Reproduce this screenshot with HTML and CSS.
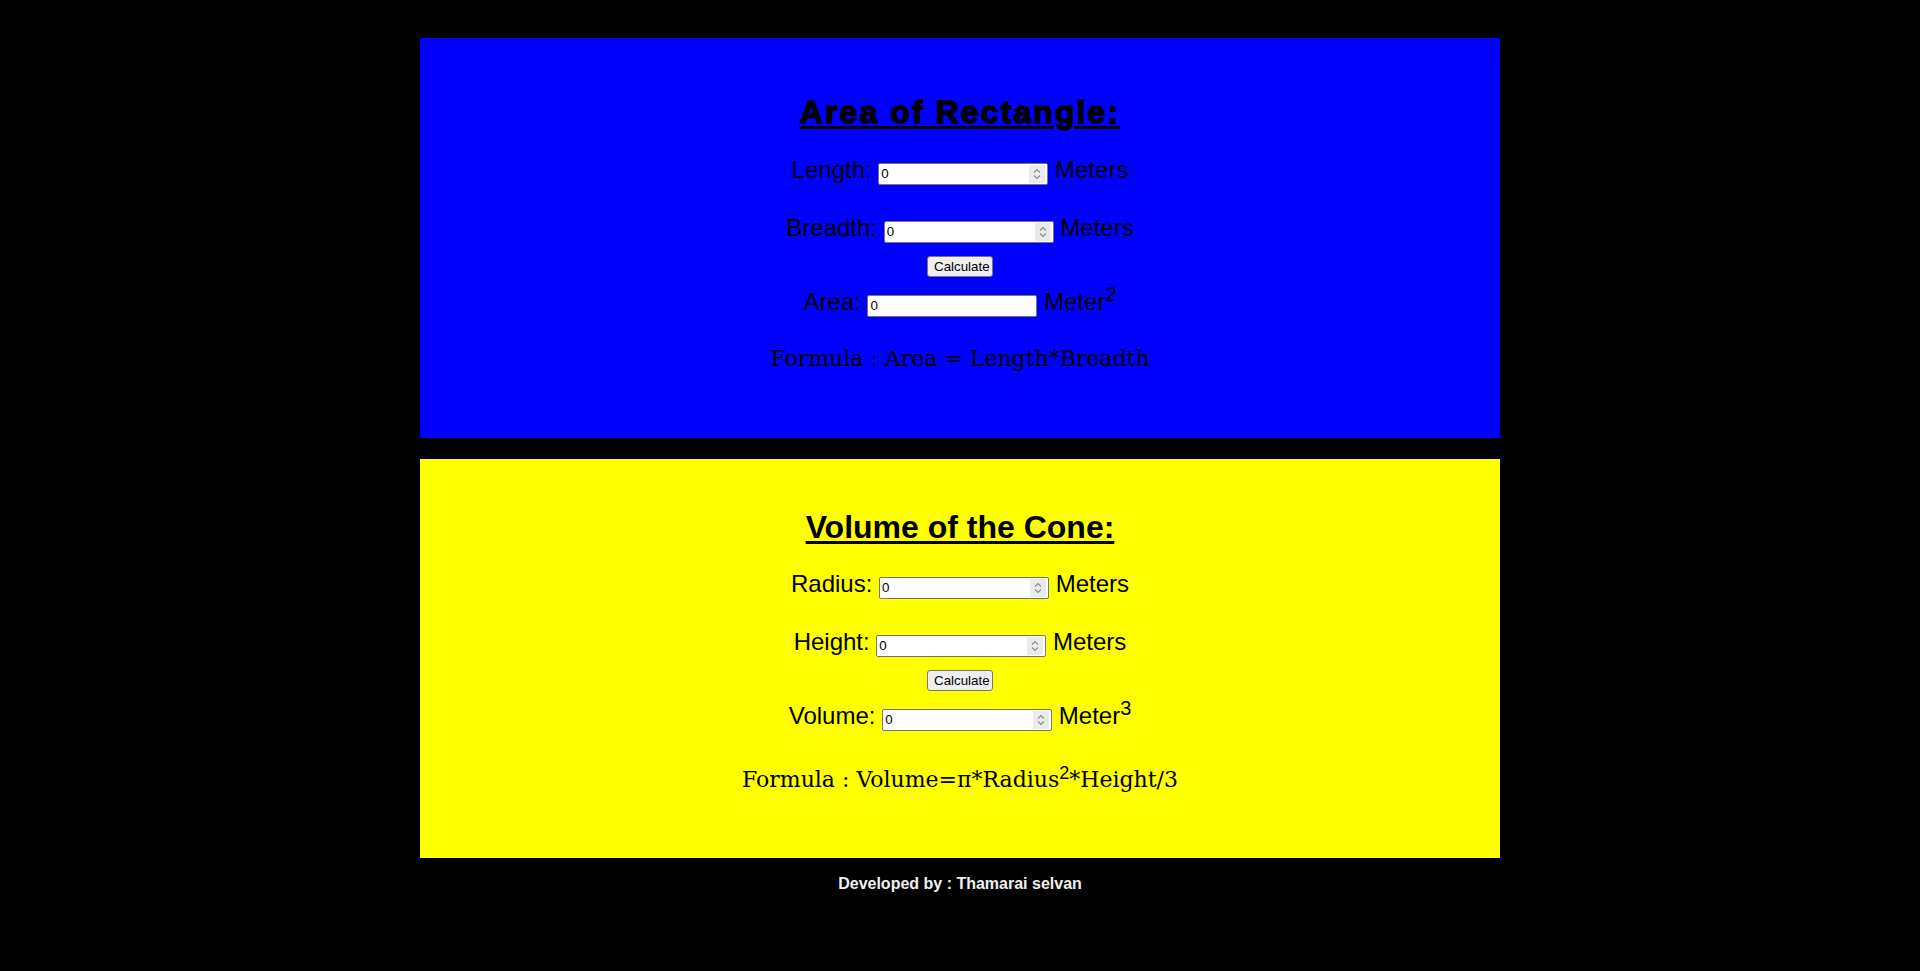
FILE: index.html
```html
<!DOCTYPE html>
<html lang="en">
<head>
<meta charset="utf-8">
<title>Area and Volume Calculator</title>
<link rel="stylesheet" href="styles.css">
</head>
<body>
<main class="page">
  <section class="card card-blue">
    <h1 class="title title-black">Area of Rectangle:</h1>
    <div class="row row-first">Length: <span class="num"><input class="field" type="number" value="0"><span class="spin"><svg width="16" height="18" viewBox="0 0 16 18"><path d="M5 7.5 L8 4.5 L11 7.5 M5 10.5 L8 13.5 L11 10.5" fill="none" stroke="#8a8a8a" stroke-width="1.1"/></svg></span></span> Meters</div>
    <div class="row row-second">Breadth: <span class="num"><input class="field" type="number" value="0"><span class="spin"><svg width="16" height="18" viewBox="0 0 16 18"><path d="M5 7.5 L8 4.5 L11 7.5 M5 10.5 L8 13.5 L11 10.5" fill="none" stroke="#8a8a8a" stroke-width="1.1"/></svg></span></span> Meters</div>
    <div class="btn-row"><button class="btn" type="button">Calculate</button></div>
    <div class="row row-result">Area: <input class="field" type="text" value="0"> Meter<sup class="sup">2</sup></div>
    <p class="formula formula-blue">Formula : Area = Length*Breadth</p>
  </section>
  <section class="card card-yellow">
    <h1 class="title title-bold">Volume of the Cone:</h1>
    <div class="row row-first-y">Radius: <span class="num"><input class="field" type="number" value="0"><span class="spin"><svg width="16" height="18" viewBox="0 0 16 18"><path d="M5 7.5 L8 4.5 L11 7.5 M5 10.5 L8 13.5 L11 10.5" fill="none" stroke="#8a8a8a" stroke-width="1.1"/></svg></span></span> Meters</div>
    <div class="row row-second">Height: <span class="num"><input class="field" type="number" value="0"><span class="spin"><svg width="16" height="18" viewBox="0 0 16 18"><path d="M5 7.5 L8 4.5 L11 7.5 M5 10.5 L8 13.5 L11 10.5" fill="none" stroke="#8a8a8a" stroke-width="1.1"/></svg></span></span> Meters</div>
    <div class="btn-row"><button class="btn" type="button">Calculate</button></div>
    <div class="row row-result">Volume: <span class="num"><input class="field" type="number" value="0"><span class="spin"><svg width="16" height="18" viewBox="0 0 16 18"><path d="M5 7.5 L8 4.5 L11 7.5 M5 10.5 L8 13.5 L11 10.5" fill="none" stroke="#8a8a8a" stroke-width="1.1"/></svg></span></span> Meter<sup class="sup">3</sup></div>
    <p class="formula formula-yellow">Formula : Volume=π*Radius<sup class="fsup">2</sup>*Height/3</p>
  </section>
  <footer class="footer">Developed by : Thamarai selvan</footer>
</main>
</body>
</html>
```
FILE: styles.css
```css
html, body {
  margin: 0;
  padding: 0;
  background: #000;
}
.page {
  padding-top: 38px;
  display: flex;
  flex-direction: column;
  align-items: center;
  font-family: "Liberation Sans", Arial, sans-serif;
  color: #000;
}
.card {
  width: 1080px;
  box-sizing: border-box;
  text-align: center;
}
.card-blue {
  background: #0000ff;
  height: 400px;
  padding-top: 54px;
}
.card-yellow {
  background: #ffff00;
  height: 399px;
  margin-top: 21px;
  padding-top: 48px;
}
.title {
  margin: 0;
  height: 40px;
  line-height: 40px;
  font-size: 32px;
  font-weight: 700;
  text-decoration: underline;
  text-underline-offset: 3px;
}
.title-black {
  letter-spacing: 2.1px;
  -webkit-text-stroke: 1.5px #000;
  text-decoration-thickness: 3px;
}
.title-bold {
  text-decoration-thickness: 3px;
}
.row {
  height: 32px;
  line-height: 32px;
  font-size: 24px;
  white-space: nowrap;
}
.row-first { margin-top: 22px; }
.row-first-y { margin-top: 21px; }
.row-second { margin-top: 26px; }
.row-result { margin-top: 9px; }
.num {
  position: relative;
  display: inline-flex;
  vertical-align: baseline;
}
.field {
  box-sizing: border-box;
  width: 170px;
  height: 22px;
  padding: 1px 2px;
  font-family: "Liberation Sans", Arial, sans-serif;
  font-size: 13.33px;
  color: #000;
  background: #fff;
  border: 1px solid #767676;
  border-radius: 2px;
  vertical-align: baseline;
  -moz-appearance: textfield;
  appearance: textfield;
}
.field::-webkit-inner-spin-button,
.field::-webkit-outer-spin-button {
  -webkit-appearance: none;
  margin: 0;
}
.spin {
  position: absolute;
  right: 3px;
  top: 2px;
  width: 16px;
  height: 18px;
  background: #ebebee;
  display: block;
}
.spin svg {
  display: block;
}
.sup {
  font-size: 20px;
  line-height: 0;
}
.btn-row {
  margin-top: 12px;
  height: 21px;
  line-height: 21px;
}
.btn {
  box-sizing: border-box;
  height: 21px;
  width: 66px;
  padding: 1px 6px;
  font-family: "Liberation Sans", Arial, sans-serif;
  font-size: 13.33px;
  color: #000;
  background: #efefef;
  border: 1px solid #767676;
  border-radius: 3px;
  vertical-align: top;
}
.formula {
  margin: 0;
  height: 40px;
  line-height: 40px;
  font-family: "DejaVu Serif", Georgia, serif;
  font-size: 22px;
  white-space: nowrap;
}
.formula-blue { margin-top: 21px; }
.formula-yellow { margin-top: 28px; }
.fsup {
  font-family: "Liberation Sans", Arial, sans-serif;
  font-size: 18px;
  line-height: 0;
}
.footer {
  margin-top: 16px;
  height: 20px;
  line-height: 20px;
  font-size: 16px;
  font-weight: 700;
  color: #f0f0f0;
}
```
